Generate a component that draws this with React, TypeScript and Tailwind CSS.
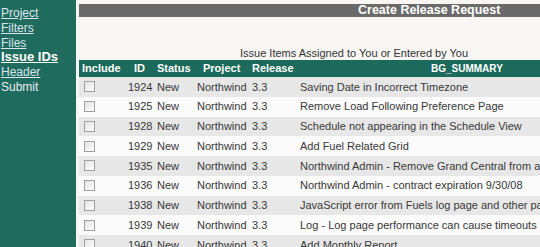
import React from "react";

const rows = [
    ["1924", "Saving Date in Incorrect Timezone"],
    ["1925", "Remove Load Following Preference Page"],
    ["1928", "Schedule not appearing in the Schedule View"],
    ["1929", "Add Fuel Related Grid"],
    ["1935", "Northwind Admin - Remove Grand Central from application"],
    ["1936", "Northwind Admin - contract expiration 9/30/08"],
    ["1938", "JavaScript error from Fuels log page and other pages"],
    ["1939", "Log - Log page performance can cause timeouts"],
    ["1940", "Add Monthly Report"],
];

const cols = "grid grid-cols-[47px_29px_40px_55px_48px_1fr]";

function NavLink({ label, active }: { label: string; active?: boolean }) {
    return (
        <a
            href="#"
            className={
                active
                    ? "block text-[13px] font-bold text-white underline"
                    : "block text-[#dbe6ee] underline"
            }
        >
            {label}
        </a>
    );
}

export default function App() {
    return (
        <div className="flex h-[247px] w-[540px] overflow-hidden bg-[#f7f6f3] font-['Liberation_Sans',Arial,sans-serif]">
            <div className="w-[76px] shrink-0 bg-[#1f6b5d] pt-[6px] pl-[1px] text-[12px] leading-[14.8px]">
                <NavLink label="Project" />
                <NavLink label="Filters" />
                <NavLink label="Files" />
                <NavLink label="Issue IDs" active />
                <NavLink label="Header" />
                <div className="text-[#e8eef2]">Submit</div>
            </div>

            <div className="ml-[3px] flex-1 overflow-hidden pt-[4px]">
                <div className="h-[13px] bg-[#6a6a6a] pl-[279px] text-[12.5px] font-bold leading-[13px] text-white whitespace-nowrap">
                    Create Release Request
                </div>
                <div className="h-[43px] pl-[161px] pt-[30px] text-[11px] leading-[13px] text-[#333] whitespace-nowrap">
                    Issue Items Assigned to You or Entered by You
                </div>

                <div className="w-[680px] text-[11px]">
                    <div className={`${cols} h-[17px] items-center bg-[#1b6a5b] font-bold text-white whitespace-nowrap`}>
                        <div className="pl-[3px]">Include</div>
                        <div className="pl-[8px]">ID</div>
                        <div className="pl-[2px]">Status</div>
                        <div className="pl-[8px]">Project</div>
                        <div className="pl-[2px]">Release</div>
                        <div className="pl-[133px] text-[10px]">BG_SUMMARY</div>
                    </div>
                    {rows.map(([id, summary], i) => (
                        <div
                            key={id}
                            className={`${cols} h-[19.75px] items-center text-[#383838] whitespace-nowrap ${
                                i % 2 === 0 ? "bg-[#e7e7e7]" : "bg-[#fbfbfb]"
                            }`}
                        >
                            <div className="pl-[5px]">
                                <span className="block h-[11px] w-[11px] border border-[#a0a0a0] bg-gradient-to-br from-[#e2e2e2] to-white" />
                            </div>
                            <div className="pl-[2px]">{id}</div>
                            <div className="pl-[2px]">New</div>
                            <div className="pl-[2px]">Northwind</div>
                            <div className="pl-[2px]">3.3</div>
                            <div className="pl-[2px]">{summary}</div>
                        </div>
                    ))}
                </div>
            </div>
        </div>
    );
}
